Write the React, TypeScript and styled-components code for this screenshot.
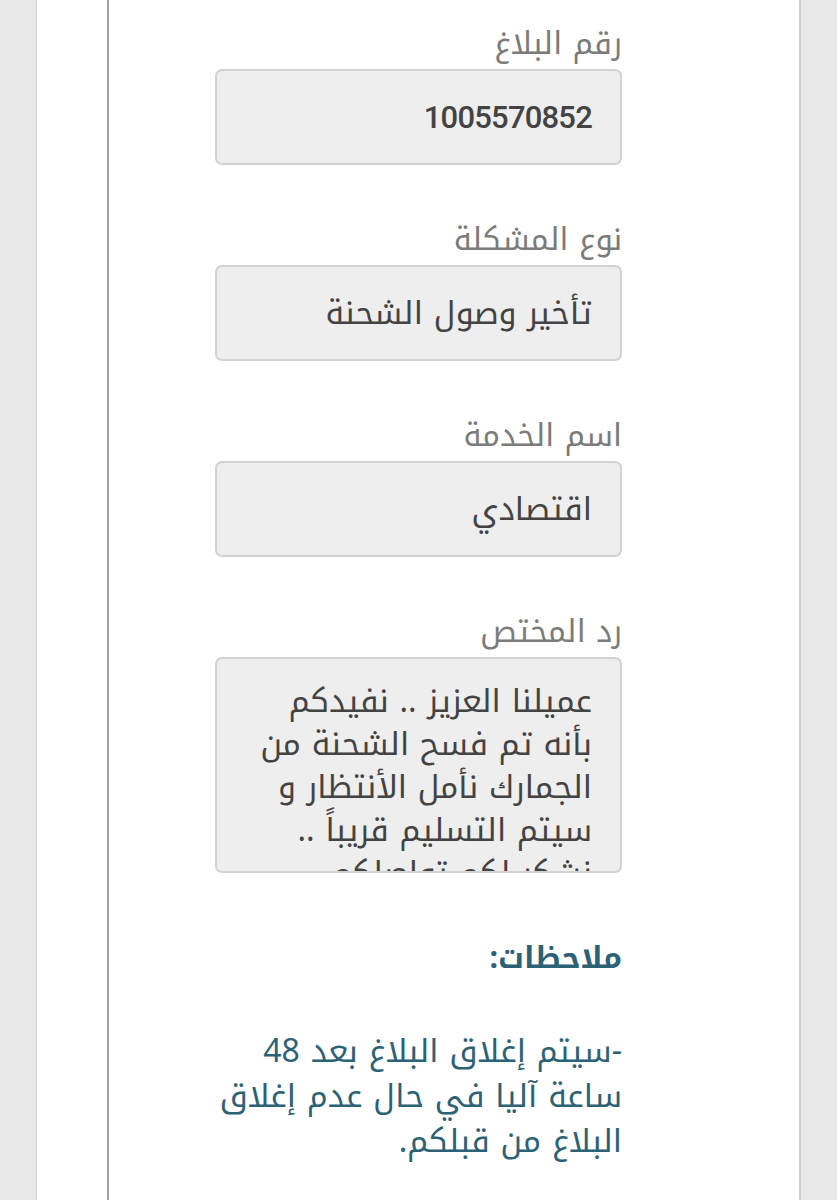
import React from "react";
import styled, { createGlobalStyle } from "styled-components";

const Global = createGlobalStyle`
  html, body { margin: 0; padding: 0; background: #e8e8e8; }
  body { font-family: "Noto Kufi Arabic", "Noto Sans Arabic", "DejaVu Sans", sans-serif; }
`;

const Page = styled.div`
  margin: 0 36px;
  min-height: 1200px;
  background: #ffffff;
  border-left: 1px solid #d4d4d4;
  border-right: 2px solid #d0d0d0;
  padding-left: 70px;
  box-sizing: border-box;
`;

const Panel = styled.div`
  border-left: 2px solid #a3a3a3;
  min-height: 1200px;
  padding: 26px 0 0 106px;
  box-sizing: border-box;
`;

const Form = styled.div`
  width: 407px;
  direction: rtl;
  display: flex;
  flex-direction: column;
`;

const Group = styled.div`
  display: flex;
  flex-direction: column;
  gap: 7px;
  margin-bottom: 57px;
`;

const Label = styled.div`
  font-size: 31px;
  line-height: 36px;
  color: #7b7b7b;
  text-align: right;
`;

const Box = styled.div<{ $tall?: boolean }>`
  box-sizing: border-box;
  height: ${(p) => (p.$tall ? "216px" : "96px")};
  background: #eeeeee;
  border: 2px solid #d2d2d2;
  border-radius: 7px;
  padding: ${(p) => (p.$tall ? "21px 28px 0 20px" : "0 28px 0 20px")};
  display: flex;
  align-items: ${(p) => (p.$tall ? "flex-start" : "center")};
  overflow: hidden;
  color: #434343;
  font-size: 32px;
  line-height: 43px;
  text-align: right;
`;

const Number = styled.span`
  font-family: Roboto, "Liberation Sans", sans-serif;
  font-size: 31px;
  font-weight: 500;
  letter-spacing: -0.8px;
`;

const Notes = styled.div`
  margin-top: 6px;
  color: #2c6275;
  font-size: 32px;
  line-height: 45px;
  text-align: right;
`;

const NotesTitle = styled.div`
  font-weight: 700;
  font-size: 30px;
  margin-bottom: 48px;
`;

export default function App() {
  return (
    <>
      <Global />
      <Page>
        <Panel>
          <Form>
            <Group>
              <Label>رقم البلاغ</Label>
              <Box>
                <Number>1005570852</Number>
              </Box>
            </Group>
            <Group>
              <Label>نوع المشكلة</Label>
              <Box>تأخير وصول الشحنة</Box>
            </Group>
            <Group>
              <Label>اسم الخدمة</Label>
              <Box>اقتصادي</Box>
            </Group>
            <Group>
              <Label>رد المختص</Label>
              <Box $tall>
                عميلنا العزيز .. نفيدكم بأنه تم فسح الشحنة من الجمارك نأمل الأنتظار و سيتم التسليم قريباً .. نشكر لكم تواصلكم
              </Box>
            </Group>
            <Notes>
              <NotesTitle>ملاحظات:</NotesTitle>
              -سيتم إغلاق البلاغ بعد 48 ساعة آليا في حال عدم إغلاق البلاغ من قبلكم.
            </Notes>
          </Form>
        </Panel>
      </Page>
    </>
  );
}
